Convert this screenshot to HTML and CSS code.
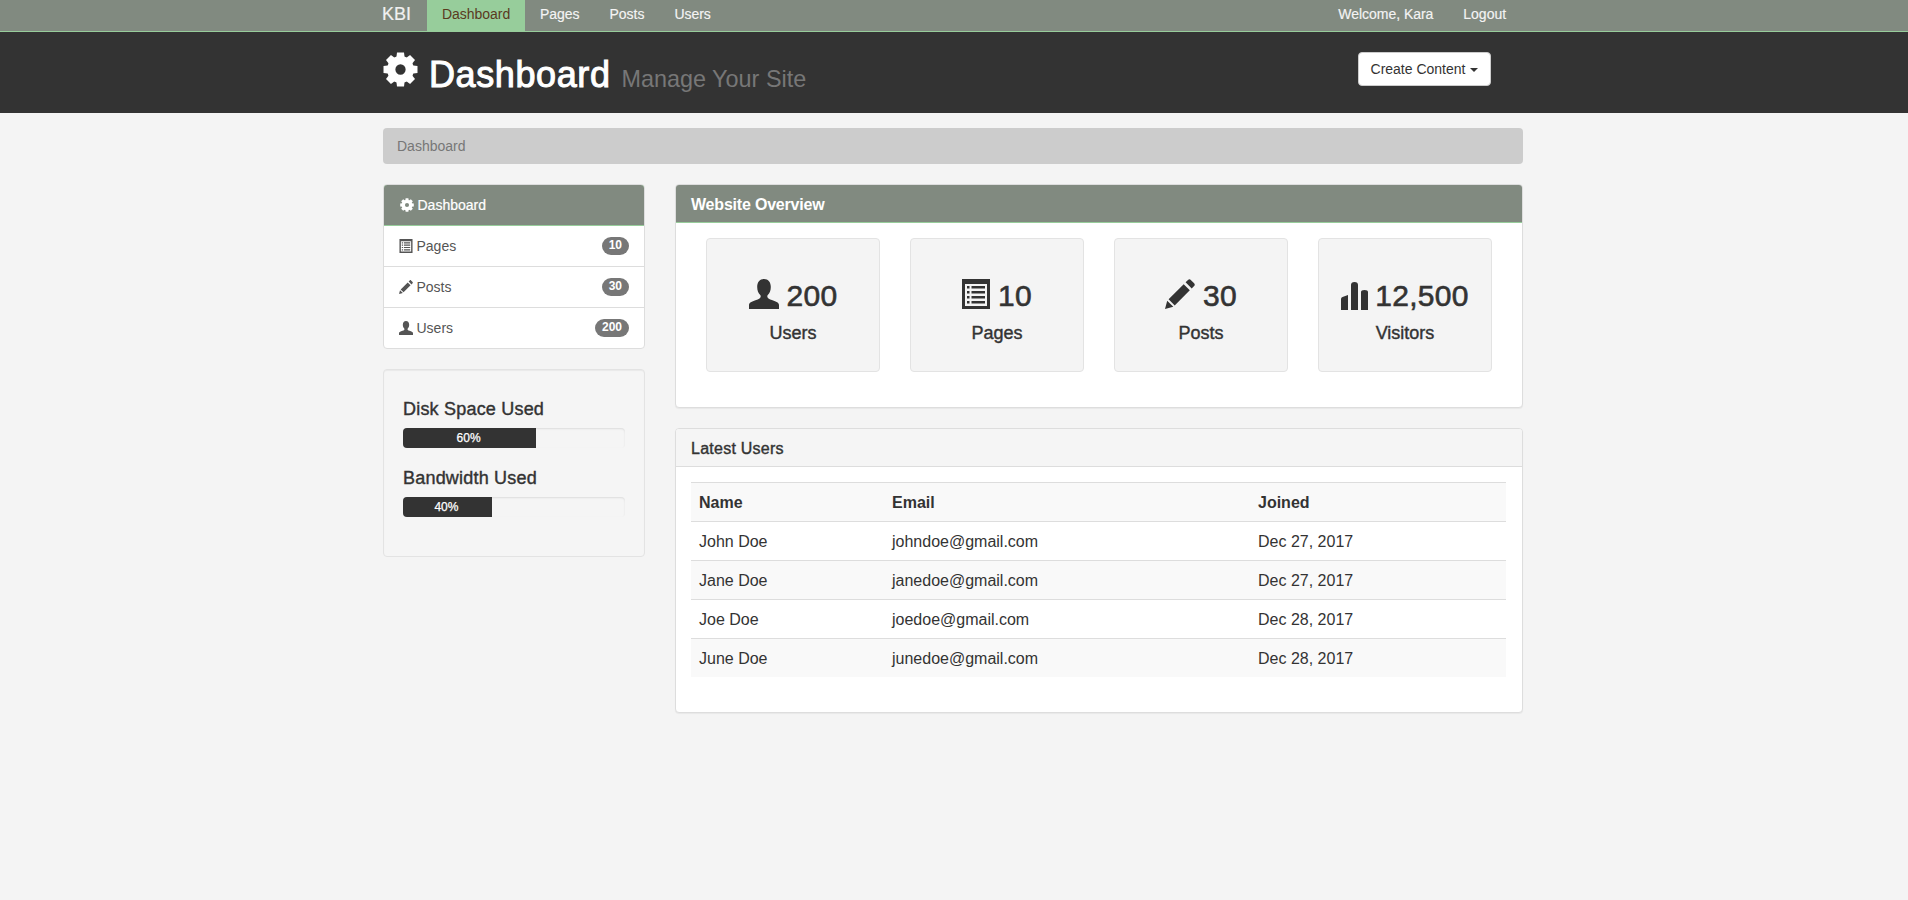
FILE: index.html
```html
<!DOCTYPE html>
<html lang="en">
<head>
<meta charset="utf-8">
<title>Dashboard</title>
<link rel="stylesheet" href="styles.css">
</head>
<body>
<svg class="defs" width="0" height="0" aria-hidden="true">
  <symbol id="i-cog" viewBox="0 0 34 34">
    <circle cx="17" cy="17" r="9" fill="none" stroke="currentColor" stroke-width="8"/>
    <g fill="currentColor">
      <path d="M13.6 0.5h6.800l.8 6h-8.400z"/>
      <path d="M13.6 0.5h6.800l.8 6h-8.400z" transform="rotate(45 17 17)"/>
      <path d="M13.6 0.5h6.800l.8 6h-8.400z" transform="rotate(90 17 17)"/>
      <path d="M13.6 0.5h6.800l.8 6h-8.400z" transform="rotate(135 17 17)"/>
      <path d="M13.6 0.5h6.800l.8 6h-8.400z" transform="rotate(180 17 17)"/>
      <path d="M13.6 0.5h6.800l.8 6h-8.400z" transform="rotate(225 17 17)"/>
      <path d="M13.6 0.5h6.800l.8 6h-8.400z" transform="rotate(270 17 17)"/>
      <path d="M13.6 0.5h6.800l.8 6h-8.400z" transform="rotate(315 17 17)"/>
    </g>
  </symbol>
  <symbol id="i-user" viewBox="0 0 30 30">
    <path fill="currentColor" d="M15 0c-4.300 0-6.800 3.200-6.800 8 0 3.400 1.200 6.300 3 8 .5.500.6 1.300.4 2-.4 1.400-2.100 2.200-4.500 3.100C3.800 22.300 0 23.500 0 26v4h30v-4c0-2.500-3.800-3.700-7.100-4.900-2.400-.9-4.100-1.700-4.500-3.100-.2-.7-.1-1.500.4-2 1.800-1.700 3-4.600 3-8C21.800 3.200 19.300 0 15 0z"/>
  </symbol>
  <symbol id="i-list" viewBox="0 0 28 30">
    <path fill="currentColor" fill-rule="evenodd" d="M0 0h28v30H0zM3 5v22h22V5z"/>
    <path fill="currentColor" d="M5 7h2.500v2.500H5zM9.500 7H23v2.500H9.500zM5 12h2.500v2.500H5zM9.500 12H23v2.500H9.500zM5 17h2.500v2.500H5zM9.500 17H23v2.500H9.500zM5 22h2.500v2.500H5zM9.500 22H23v2.500H9.500z"/>
  </symbol>
  <symbol id="i-pencil" viewBox="0 0 30 30">
    <path fill="currentColor" d="M0 30l2.200-8.300 6.100 6.100zM3.600 20.300L18.700 5.200l6.100 6.100L9.700 26.400zM20.600 3.300L23 .9c.9-.9 2-.9 2.800 0l3.300 3.300c.9.900.9 2 0 2.800l-2.400 2.400z"/>
  </symbol>
  <symbol id="i-stats" viewBox="0 0 28 28">
    <path fill="currentColor" d="M0 17q0-1.500 1.500-2L7 13V28H0zM10 3Q10 0 13.500 0T17 3v25h-7zM20 10q0-2 3.500-2T27 10v18h-7z"/>
  </symbol>
</svg>

<nav class="topbar">
  <div class="container topbar-in">
    <a class="brand">KBI</a>
    <ul class="nav">
      <li class="nav-item is-active">Dashboard</li>
      <li class="nav-item">Pages</li>
      <li class="nav-item">Posts</li>
      <li class="nav-item">Users</li>
    </ul>
    <ul class="nav nav-right">
      <li class="nav-item">Welcome, Kara</li>
      <li class="nav-item">Logout</li>
    </ul>
  </div>
</nav>

<header class="hero">
  <div class="container hero-in">
    <h1 class="hero-title"><svg class="hero-cog"><use href="#i-cog"/></svg><span class="hero-name">Dashboard</span><small class="hero-sub">Manage Your Site</small></h1>
    <button class="create-btn" type="button">Create Content<span class="caret"></span></button>
  </div>
</header>

<div class="container">
  <div class="breadcrumb">Dashboard</div>
  <div class="columns">
    <aside class="side">
      <div class="menu">
        <div class="menu-item is-current"><svg class="mi"><use href="#i-cog"/></svg>Dashboard</div>
        <div class="menu-item"><svg class="mi"><use href="#i-list"/></svg>Pages<span class="badge">10</span></div>
        <div class="menu-item"><svg class="mi"><use href="#i-pencil"/></svg>Posts<span class="badge">30</span></div>
        <div class="menu-item"><svg class="mi"><use href="#i-user"/></svg>Users<span class="badge">200</span></div>
      </div>
      <div class="well">
        <h4 class="well-title">Disk Space Used</h4>
        <div class="progress"><div class="progress-bar" style="width:60%">60%</div></div>
        <h4 class="well-title">Bandwidth Used</h4>
        <div class="progress"><div class="progress-bar" style="width:40%">40%</div></div>
      </div>
    </aside>
    <main class="main">
      <section class="panel">
        <div class="panel-head panel-head-main">Website Overview</div>
        <div class="panel-body">
          <div class="stats">
            <div class="stat"><h2 class="stat-num"><svg class="si"><use href="#i-user"/></svg>200</h2><h4 class="stat-label">Users</h4></div>
            <div class="stat"><h2 class="stat-num"><svg class="si si-list"><use href="#i-list"/></svg>10</h2><h4 class="stat-label">Pages</h4></div>
            <div class="stat"><h2 class="stat-num"><svg class="si"><use href="#i-pencil"/></svg>30</h2><h4 class="stat-label">Posts</h4></div>
            <div class="stat"><h2 class="stat-num"><svg class="si si-stats"><use href="#i-stats"/></svg>12,500</h2><h4 class="stat-label">Visitors</h4></div>
          </div>
        </div>
      </section>
      <section class="panel">
        <div class="panel-head">Latest Users</div>
        <div class="panel-body">
          <table class="table">
            <colgroup><col class="c1"><col class="c2"><col></colgroup>
            <thead><tr><th>Name</th><th>Email</th><th>Joined</th></tr></thead>
            <tbody>
              <tr><td>John Doe</td><td>johndoe@gmail.com</td><td>Dec 27, 2017</td></tr>
              <tr><td>Jane Doe</td><td>janedoe@gmail.com</td><td>Dec 27, 2017</td></tr>
              <tr><td>Joe Doe</td><td>joedoe@gmail.com</td><td>Dec 28, 2017</td></tr>
              <tr><td>June Doe</td><td>junedoe@gmail.com</td><td>Dec 28, 2017</td></tr>
            </tbody>
          </table>
        </div>
      </section>
    </main>
  </div>
</div>
</body>
</html>
```
FILE: styles.css
```css
* { box-sizing: border-box; }
html, body { height: 100%; }
body {
  margin: 0;
  background: #f4f4f4;
  color: #333;
  font-family: "Liberation Sans", Arial, sans-serif;
  font-size: 14px;
  line-height: 20px;
  overflow: hidden;
}
.defs { position: absolute; }
.container { width: 1140px; margin-left: 383px; }

/* top bar */
.topbar { height: 32px; background: #818a80; border-bottom: 1px solid #97cd9b; }
.topbar-in { display: flex; height: 31px; align-items: stretch; }
.brand { font-size: 18px; line-height: 28px; color: #f0f0f0; width: 44px; margin-left: -1px; margin-right: 1px; -webkit-text-stroke: .2px #f0f0f0; }
.nav { display: flex; list-style: none; margin: 0; padding: 0; }
.nav-right { margin-left: auto; padding-right: 2px; }
.nav-item { padding: 0 15px; line-height: 28px; color: #f4f4f4; letter-spacing: -.03px; -webkit-text-stroke: .15px #f4f4f4; }
.is-active { width: 98px; background: #97cd9b; color: #5a3a1e; -webkit-text-stroke: 0; }

/* hero */
.hero { height: 81px; background: #333; }
.hero-in { display: flex; justify-content: space-between; height: 81px; padding-right: 32px; }
.hero-title { display: flex; align-items: baseline; margin: 0; padding-top: 23px; font-size: 36px; line-height: 40px; font-weight: 400; color: #fff; }
.hero-cog { width: 35px; height: 35px; margin-top: -3px; margin-right: 11px; align-self: flex-start; color: #fff; }
.hero-name { letter-spacing: .6px; -webkit-text-stroke: 1px #fff; }
.hero-sub { margin-left: 11px; font-size: 23.4px; color: #777; }
.create-btn {
  align-self: flex-start;
  margin-top: 20px;
  height: 34px;
  width: 133px;
  padding: 0;
  background: #fff;
  border: 1px solid #ccc;
  border-radius: 4px;
  color: #333;
  font: inherit;
  font-size: 14px;
}
.caret { display: inline-block; margin-left: 5px; vertical-align: middle; border-top: 4px solid #333; border-left: 4px solid transparent; border-right: 4px solid transparent; }

/* breadcrumb */
.breadcrumb { height: 36px; margin: 15px 0 20px; padding: 8px 14px; background: #ccc; border-radius: 4px; color: #777; }

.columns { display: flex; gap: 30px; align-items: flex-start; }
.side { width: 262px; flex: none; }
.main { flex: 1; min-width: 0; }

/* side menu */
.menu { background: #fff; border: 1px solid #ddd; border-radius: 4px; overflow: hidden; margin-bottom: 20px; }
.menu-item { display: flex; align-items: center; height: 41px; padding: 0 15px; color: #555; border-bottom: 1px solid #ddd; }
.menu-item:last-child { height: 40px; border-bottom: 0; }
.is-current { margin: -1px -1px 0; padding: 0 16px; height: 42px; background: #818a80; border: 1px solid #97cd9b; border-radius: 4px 4px 0 0; color: #fff; -webkit-text-stroke: .2px #fff; }
.mi { width: 14px; height: 14px; margin-right: 3.5px; flex: none; }
.badge { margin-left: auto; min-width: 27px; height: 18px; padding: 0 7px; background: #777; border-radius: 10px; color: #fff; font-size: 12px; font-weight: 700; line-height: 17px; text-align: center; -webkit-text-stroke: 0; }

/* well */
.well { background: #f5f5f5; border: 1px solid #e3e3e3; border-radius: 4px; padding: 19px; box-shadow: inset 0 1px 1px rgba(0,0,0,.05); }
.well-title { margin: 10px 0; padding-top: 1px; height: 19px; font-size: 18px; line-height: 19px; font-weight: 400; color: #333; letter-spacing: .2px; -webkit-text-stroke: .4px #333; }
.progress { height: 20px; margin-bottom: 20px; background: #f5f5f5; border-radius: 4px; overflow: hidden; box-shadow: inset 0 1px 2px rgba(0,0,0,.1); }
.progress-bar { height: 20px; padding-right: 2px; background: #333; color: #fff; font-size: 12px; line-height: 20px; text-align: center; -webkit-text-stroke: .25px #fff; }

/* panels */
.panel { margin-bottom: 20px; background: #fff; border: 1px solid #ddd; border-radius: 4px; box-shadow: 0 1px 1px rgba(0,0,0,.05); }
.panel-head { height: 38px; padding: 1px 15px 0; background: #f5f5f5; border-bottom: 1px solid #ddd; border-radius: 3px 3px 0 0; font-size: 16px; line-height: 38px; color: #333; letter-spacing: .25px; -webkit-text-stroke: .4px #333; }
.panel-head-main { background: #818a80; border-bottom-color: #97cd9b; color: #fff; font-weight: 700; letter-spacing: -.2px; -webkit-text-stroke: 0; }
.panel-body { padding: 15px; }

.stats { display: flex; justify-content: center; gap: 30px; margin-bottom: 20px; }
.stat { width: 174px; height: 134px; padding-top: 40px; background: #f4f4f4; border: 1px solid #e3e3e3; border-radius: 4px; text-align: center; }
.stat-num { display: flex; justify-content: center; align-items: center; gap: 8px; margin: 0; height: 33px; font-size: 30px; line-height: 33px; font-weight: 400; color: #333; letter-spacing: .25px; -webkit-text-stroke: .6px #333; }
.si { flex: none; height: 30px; width: 30px; margin-top: -3px; }
.si-list { width: 28px; }
.si-stats { width: 28px; height: 28px; margin-top: 0; margin-right: -2px; }
.stat-label { margin: 11px 0 0; font-size: 18px; line-height: 20px; font-weight: 400; color: #333; -webkit-text-stroke: .4px #333; }

.table { width: 815px; border-collapse: collapse; margin-bottom: 20px; font-size: 16px; line-height: 22px; table-layout: fixed; }
.c1 { width: 193px; }
.c2 { width: 366px; }
.table th, .table td { height: 39px; padding: 9px 8px 7px; text-align: left; vertical-align: middle; }
.table th { border-top: 1px solid #ddd; border-bottom: 1px solid #ddd; font-weight: 700; }
.table td { border-top: 1px solid #ddd; }
.table tbody tr:first-child td { border-top: 0; }
.table tbody tr:last-child td { height: 38px; }
.table thead tr, .table tbody tr:nth-child(even) { background: #f9f9f9; }
```
